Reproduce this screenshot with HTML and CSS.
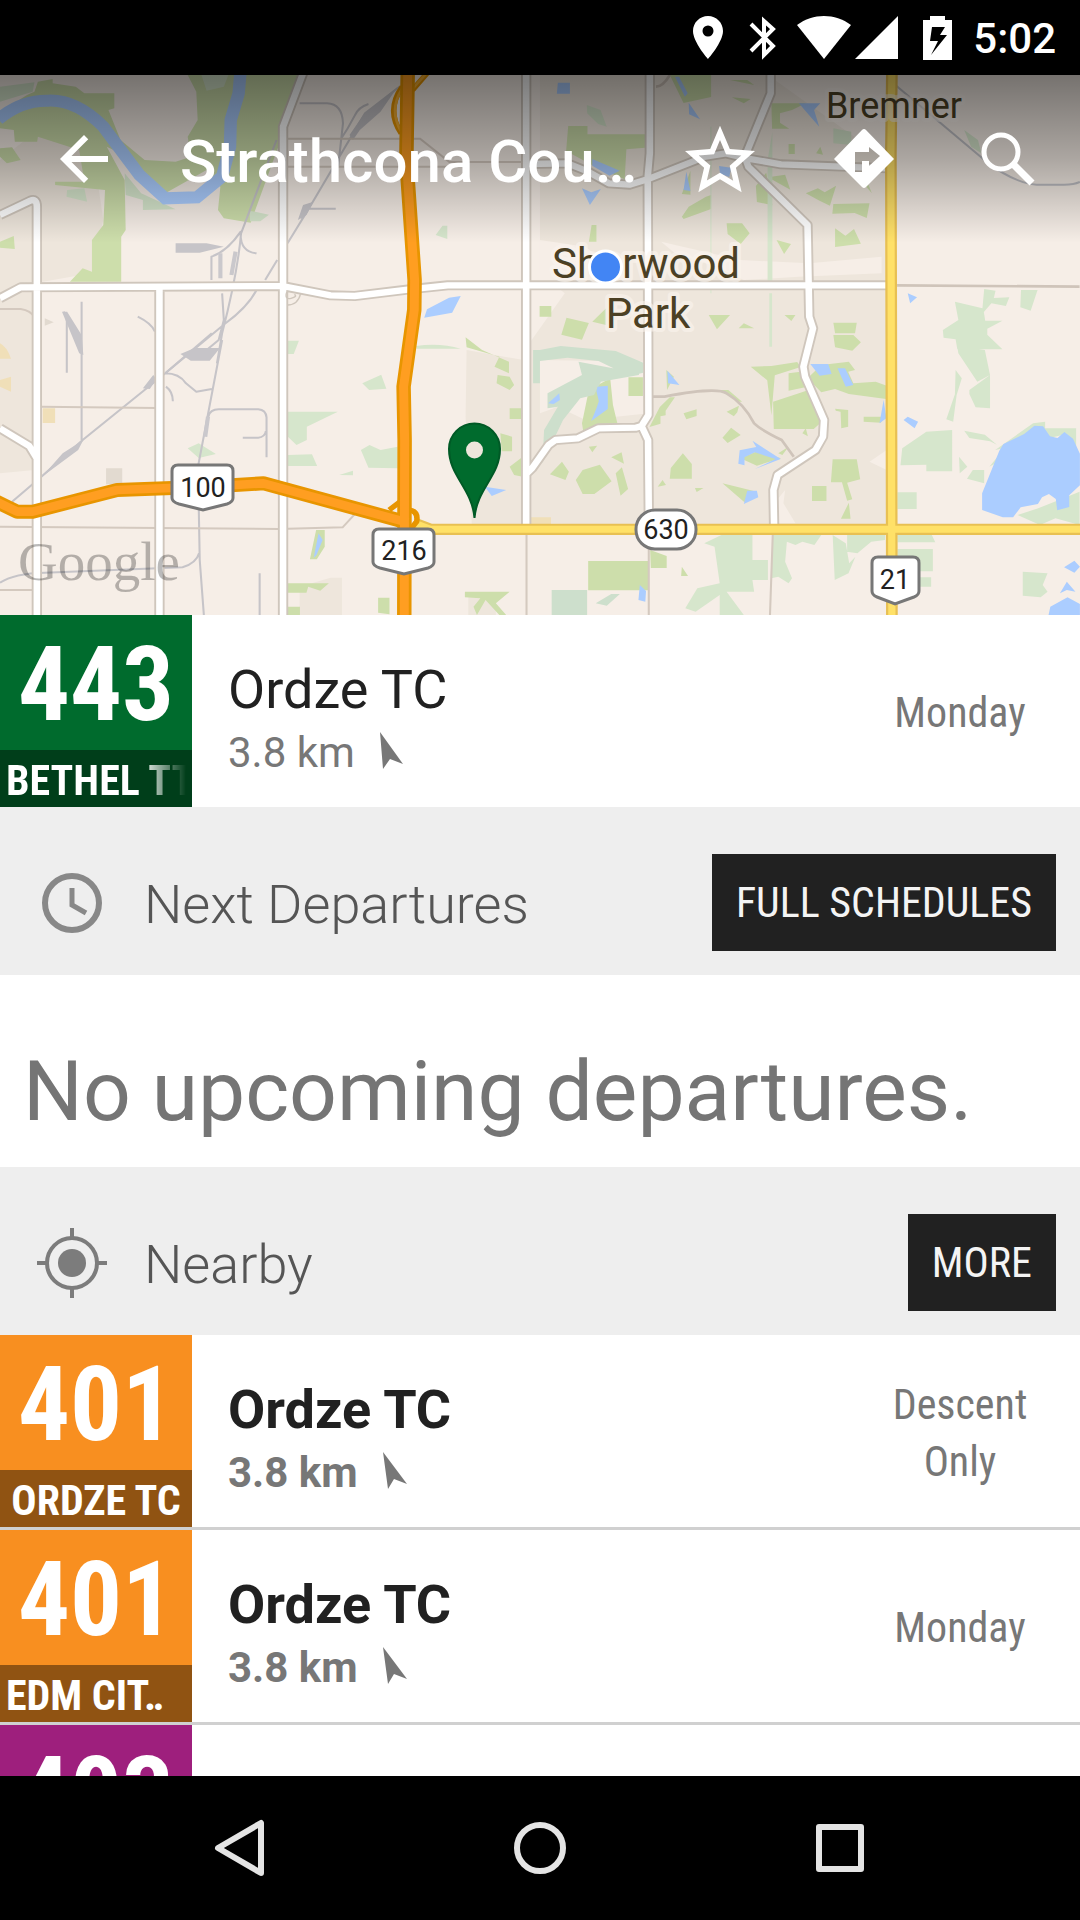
FILE: index.html
```html
<!DOCTYPE html>
<html lang="en">
<head>
<meta charset="utf-8">
<meta name="viewport" content="width=device-width, initial-scale=1">
<title>Strathcona County Transit</title>
<link rel="stylesheet" href="styles.css">
</head>
<body>
<div class="screen">
  <div class="status">
    <svg width="30" height="44" viewBox="0 0 30 44" fill="#fff"><path fill-rule="evenodd" d="M15 0C6.700 0 0 6.700 0 15c0 11 15 28 15 28s15-17 15-28C30 6.700 23.300 0 15 0zm0 9.500a5.500 5.500 0 1 1 0 11 5.500 5.500 0 0 1 0-11z"/></svg>
    <svg class="status-bluetooth" width="28" height="44" viewBox="0 0 28 44" fill="none" stroke="#fff" stroke-width="4"><path d="M2 8l22 22-9 9V5l9 8L2 35"/></svg>
    <svg class="status-wifi" width="54" height="44" viewBox="0 0 54 44" fill="#fff"><path d="M0 9C16-3 38-3 54 9L27 43z"/></svg>
    <svg width="44" height="44" viewBox="0 0 44 44" fill="#fff"><path d="M43 0v43H0z"/></svg>
    <svg class="status-battery" width="30" height="44" viewBox="0 0 30 44" fill="#fff"><path fill-rule="evenodd" d="M7 0h15v4h7v40H0V4h7zM9 11L7 25h8L8 39l16-20h-7l5-8z"/></svg>
    <span class="status-time">5:02</span>
  </div>

  <header class="map">
    <svg class="map-art" viewBox="0 75 1080 540" preserveAspectRatio="xMidYMid slice">
      <rect y="75" width="1080" height="540" fill="#f6eee7"/>
      <g transform="translate(0 60) scale(.34436 .33333)">
        <!-- built-up areas -->
        <g fill="#eee6dc">
          <path d="M0 300L110 210 270 270 300 480 265 640 100 670V1230L0 1240z"/>
          <path d="M1568 45H2230L2575 300V1395H1850L1530 1390V860L1640 700 1568 640z"/>
          <path d="M1355 870L1520 900V1392H1370L1352 1070z"/>
          <path d="M870 1580L960 1553H993V1665H870zM1360 1610H1440V1665H1360z"/>
        </g>
        <g fill="#f6eee7">
          <path d="M1568 900L1880 905 1885 1060 1700 1080 1620 1040 1568 1060zM1568 540L1700 560 1850 680 1568 690zM1960 580L2080 620 2160 660 2320 650 2560 640V590L2350 610 2150 600 1920 545zM2280 1290L2240 1340 2260 1390H2310L2275 1330zM2525 1205L2575 1170V1230z"/>
        </g>
        <g fill="#f0dfb8"><path d="M0 850Q20 860 32 896H0zM0 960L32 950V995L0 980zM124 1045h36v44h-36zM1540 1372h60v20h-60z"/></g>
        <path fill="#e2dad0" d="M308 1225h47v48h-47zM130 775l26 12-26 10z"/>

        <!-- parks -->
        <g fill="#cddeab">
          <path d="M0 165Q60 110 100 95L110 65 153 57V70L220 80 245 100H332V145L315 150 350 240 420 300 510 305 555 290 545 230 574 180 570 95 545 45H865L812 210V250L728 488 650 475 633 450 640 380 600 330 480 400 370 290 310 260 362 360 365 510 352 530V665H203L240 625 267 635V540L300 495 305 390 160 375V365H245L230 270 110 230 108 245H43L40 210 0 205z"/>
          <path d="M0 545L40 528 43 567 0 563zM0 265L35 262 60 300 20 310 0 290z"/>
          <path d="M1352 832L1400 870 1478 905V940L1436 920 1450 890 1355 862zM1445 945L1480 950 1493 975 1480 990 1442 970zM1480 1045h38v32h-38zM1453 1120l34 10v44h-30zM1480 1220l38-30v60l-25-5zM918 1410h25v50l-23 38h-20zM836 1570L955 1570 930 1592 895 1580 890 1598H836zM836 1640h35v25h-35zM1098 1613h33v50l-33-5zM1350 1595H1480L1440 1630 1470 1665H1450L1410 1620 1385 1665 1375 1640 1395 1615 1350 1612z"/>
          <path d="M1650 198h56v25h168v40l-55 5-5 90-80-35-90-50zM1945 45h120v66l-80 18zM2120 60h50l20 15zM2125 112l55 5-20 13zM2240 130h100l-40 20-35 10v28l27 18h-50zM1980 470l20-30 50-30 15-5v42l-80 30zM1980 402l25-70v72zM2195 378l30-40 18 98-45-10zM2230 352l50-8 15 45zM2340 400l35-15 20 12 33-20-18 60-30-15zM2420 432l105-2-8 44-35-15-65 2zM2425 505l30 22 25-20 20 44-75 10zM2110 490h45l22 30-26 32-38-30zM2255 540l42 12-20 30zM2290 252h18v30h-18zM2370 280l12-20 8 24zM2490 350l30 20 12 30zM1718 495h14v50h-22zM1567 738h34v32h-34zM1645 773l65 16-20 50-60-15zM2058 765h62l-38 43zM2160 790l30 15h-45zM2278 765h32l-12 18zM2420 788h68l-5 32h-58zM2420 825h58l22 22-25 25-50-10zM1720 785l40-40v50z"/>
          <path d="M1690 1090l20-100 62-35 8 80 14 60v20h-100zM1825 952h42v56h-42zM1935 930l22 20-20 40zM1945 1012l15 0-27 40v14l-15 3v22l-32 10 30-60zM1985 1060l38-12v20l-30 10zM2110 1055l36-18-5 20-10 12zM2098 1133l25-30 28 22-38 24zM2180 920l60-2 75-12 10 15-75 25-10 120-12-105zM2290 940l35-5 20 45-55 12zM2245 1025l75-25 28-10 50 85-35 32h-116zM2330 1120l10-15 6 24zM2345 955l40-40 80-10 18 25-20 5 15 35 65-5 52 20v35l-130-18-40-15-40 10zM2090 990h25l40 35-12 0zM2425 1046l38 4v50l-20 5-2-50-14-3zM2508 1070h50l15-10-15 28-50-3zM2418 1198h70l10 60-38 10 15 50-15 4-15-55h-32zM2358 1278h42v45h-42zM2465 1328l5 48h-28zM1597 1243l35-38 20 30-10 25zM1672 1260l20-30 50-16 34 50-50 38h-34zM1775 1192l30-15 7 34zM1788 1240l18-18 18 65-22 20zM1945 1256l3-32 35-44 26 32v44zM1910 1280l14-20 10 15zM2018 1284h25l-20 12zM2098 1270l100 25-36 32zM2150 1195l50-22 68 22-70 22zM1710 1160l24-3-14 20zM2260 1180l30-20-18 25zM1708 1503h174v88h-174zM1888 1470l48 18v36h-46zM1980 1520l18 28h-20z"/>
        </g>
        <g fill="#d6e6cc">
          <path d="M0 125L0 80 100 67 95 95zM585 45H663L650 80 600 92zM362 340L410 400 510 448 415 450V420L365 405zM195 390l50-5 8 40-60-15zM725 452l56 12-25 20h-30zM1265 525l20-28h14v40zM836 842l32 0-15 40h-20zM1052 970l55-26 15 42-50 4zM836 1055h145l-90 45 0 40-30 15-25-25zM1048 1170l25-15 32 15 50-10v65l-85-2zM836 1185l70-2 15 35-85 0zM545 1165l32-15 50 32-50 12zM985 1245l40-13v14zM1208 858q70-10 130 8l-128 0z"/>
          <path d="M1704 135l40 15 18 50-25-8-32-32zM2420 205l52 10v40l-52-5zM2800 210l40 30 10 40-30-20zM2243 215v450h-14V300zM2066 200v500h-3V200zM2234 700h8v160h-8z"/>
          <path d="M2738 810l45-30-10-55 80 20 5-58 33 5-5 22 45-2-10 26-42-8-22 26 4 26 50 0-44 24v18l44 44H2780l-5-30-35-5zM2965 690h48l-20 62-30-10zM2780 860l80 10 15 75-37 20-55-85zM2775 930l18 25-15 50-10 80-20-7 25-75zM2815 990l60-45v100l-42-3-18-40zM2620 1165l70-50 75-5v124h-75v-20l-75 2zM2800 1112l60 12 35 30-20-10-60-10zM2785 1190l24 30-22 20zM2825 1230h33v40l-50-14zM2873 1220l40-50-4 30zM2890 1170l110-80 35-5v20h90v80l-40-60-40 10z"/>
          <path d="M2955 1365l60-20 120-50v100l-70-20-45 20zM2606 1297h56v50h-56zM2606 1425l100 0 10 22h-110zM2606 1467h103v67h-50v18l45 0v28h-98zM2970 1535l72 5-14 35 14 20-20 17-52-5zM2095 1425h90v75h45l0 60-45 0 5 35-80 0 50 70h-70v-60l-70 50-30-10 35-60 65-15-15-110-30-10zM2245 1425h140l-20 30-35-10-20 10-25-10-5 60 20 50-10 15-30-20-20 5zM2418 1425l38 25 10 60 18-20-20 50-40 20zM2460 1425h110v15l-40 5-40 35-30-5z"/>
        </g>
        <g fill="#cddfcc">
          <path d="M1568 870l60-12 160 15 80 35v30l-40 10-90-45-90-10-80 10zM1680 905l100 20 80 0-5 20-110 20-20 40-40 10-50 65-60 130 5-100 40-70-30 5 0-45 100-55zM1602 1590h103v75h-103zM1548 870h20v100h-20zM1730 1630l45-28h25l-38 35z"/>
        </g>

        <!-- water -->
        <path fill="none" stroke="#abcdff" stroke-width="36" d="M-5 178Q60 120 140 122Q220 118 300 200L405 345 480 415 572 412 645 350 668 260 670 180 693 100 698 40"/>
        <g fill="#abcdff">
          <path d="M1232 773l8-25 64-35 34-5-25 50zM925 1420l12 20-18 45-8 8zM1408 1280l62 10-42 18zM1620 68h35v33h-38zM1960 50l12 0 25 50-8 10zM2000 128l33 50-32-15zM2320 130h62l-18 20 15 50-38-45zM1720 297l80 35-30 15-50-30zM1985 390l8-55 12 58zM2088 318l35 5-5 28-27-10zM1690 385l27 12 28-10-32 48zM2636 700l27 12-20 18z"/>
          <path d="M1735 980l30-3v70l-48 36 14-35 8-24-7-30zM1592 1030l32-30 2 20-18 12zM1938 932l35 43-33-5zM2353 912h52l10 30-35 5zM2432 925h22l24 50-22 5zM2566 1020l8 55-20 15zM2624 1080l12-10 30 15-10 20zM2185 1142l82 55-75 30 60-30-60-20-30 15 0 24-18-5 4-40 48-10zM2170 1292h28l4 20-42 20zM1858 1575l18 18-2 32-20-5z"/>
          <path d="M2852 1300l0 50 60 22h30l22-30 50-10 12-20 20-10 20 15 4 34 35-10v-35l31-30v-95l-20-45-25-20-20 18-22-5-20-30-25-2-30 25-60 30-12 20zM3090 1522l30-20 16 18-16 18zM3078 1600l20-35 25 30-25-5zM3045 1665l5-25 50-28 36 20v33z"/>
        </g>

        <!-- railways -->
        <g fill="none" stroke="#c6c4c8" stroke-width="6" stroke-linejoin="round">
          <path d="M870 130h80q44 2 46 60l-14 130M1160 80L1060 160 900 440 835 550M1070 132q-30 10-40 35-20 40-40 70M975 446h-80l-20 30M803 240L700 520Q690 640 645 820L630 910M745 580q-50-5-46-65-40 60-85 75l0 70M805 600L770 660M745 690Q720 740 655 790L480 940M645 700l5 80-15 60-35 30"/>
          <path d="M645 840L575 1220 580 1500 592 1665M605 1070q5-22 30-22h115q22 2 24 24v120M705 1133h45q20-2 22-20M480 940q40 0 60 30l30 25 45-8M482 980q20 15 20 44M185 755l50 100M194 775v163M237 725v415M400 770q40 20 50 45M615 820L480 940 240 1140 120 1250 35 1325M0 1568Q40 1540 130 1538L530 1522Q570 1510 578 1480M754 1540v125"/>
        </g>
        <g fill="#c6c4c8"><path d="M510 550h90l50 10-70 18h-70zM565 864l74 0-30 38h-55l-30-20zM122 1250l60-70 60-40-15 30zM415 985l30-40 10 12-20 30zM180 755l15 0 42 70 5 60-12-5zM1015 225l40-60 100-85-50 75-60 55-20 30zM865 480l15-45 30-10-20 40z"/></g>
        <path fill="none" stroke="#cac8cc" stroke-width="12" d="M672 645l12-70M640 580v75M596 1130l8-60"/>

        <!-- minor roads -->
        <g fill="none" stroke="#d4c9bf" stroke-width="6">
          <path d="M0 747h60q30 5 40 25M120 1040l335 4M0 1400l460 4 350 3 185-5 40-45M0 1590h100M830 236h390l85 70h220M830 320h480M1529 1425v240M1884 1460v205M2244 1425l-8 240"/>
          <path d="M1890 1010h40Q2080 980 2110 1000 2160 1030 2190 1090 2210 1110 2270 1140L2305 1190M2605 676l530 4M1905 80q20 0 40-35" stroke="#cfc4ba" stroke-width="8"/>
          <path d="M2600 75L2870 310Q2950 370 3010 374h80q30 0 46-8" stroke="#bfbfc4"/>
        </g>

        <!-- main roads -->
        <g fill="none" stroke="#cfc6bc" stroke-width="30" stroke-linejoin="round">
          <path d="M0 465L88 422Q107 414 107 440V1665M463 1665V680M880 40L822 200V1665M1528 40V1395M1530 1240L1545 1225 1593 1155 1613 1140 1678 1135 1738 1105 1846 1103 1863 1098M0 715L60 682 820 678 960 706 1030 708 1190 688 1300 676 2578 676M0 1105L85 1158 107 1195M1887 40V280L1881 350 1883 1065 1863 1098 1882 1140 1884 1360M2238 40V100L2163 290 2173 320 2345 495 2350 770 2361 805 2333 920 2338 950 2393 1080 2390 1130 2368 1170 2258 1245 2246 1290 2248 1400M1528 312L1648 310 1708 335 1768 370 1828 374 1880 358 2048 290 2108 280 2168 295 2268 313 2578 325"/>
          <path stroke="#fff" stroke-width="19" d="M0 465L88 422Q107 414 107 440V1665M463 1665V680M880 40L822 200V1665M1528 40V1395M1530 1240L1545 1225 1593 1155 1613 1140 1678 1135 1738 1105 1846 1103 1863 1098M0 715L60 682 820 678 960 706 1030 708 1190 688 1300 676 2578 676M0 1105L85 1158 107 1195M1887 40V280L1881 350 1883 1065 1863 1098 1882 1140 1884 1360M2238 40V100L2163 290 2173 320 2345 495 2350 770 2361 805 2333 920 2338 950 2393 1080 2390 1130 2368 1170 2258 1245 2246 1290 2248 1400M1528 312L1648 310 1708 335 1768 370 1828 374 1880 358 2048 290 2108 280 2168 295 2268 313 2578 325"/>
        </g>
        <path fill="none" stroke="#cfc6bc" stroke-width="4" d="M833 695q-8 25 12 20t10-12M835 735q30 0 38-34"/>

        <!-- highways -->
        <g fill="none" stroke-linejoin="round">
          <path stroke="#e8c053" stroke-width="34" d="M2590 40L2587 280 2590 1665M1200 1388L1250 1408H3140"/>
          <path stroke="#ffe168" stroke-width="21" d="M2590 40L2587 280 2590 1665M1200 1388L1250 1408H3140"/>
          <path stroke="#e89500" stroke-width="16" d="M1168 80Q1120 150 1165 220M1240 40L1198 90M1130 1350l45-35M1190 1350q25 5 20 35l-20 25M1120 1375l50 25"/>
          <path stroke="#f9b233" stroke-width="8" d="M1168 85Q1128 150 1165 215M1238 40L1195 90"/>
          <path stroke="#e89500" stroke-width="42" d="M1184 40L1180 300 1204 660 1203 750 1172 980 1175 1140 1174 1665M-10 1325L50 1355H95L340 1290 600 1280 765 1270 1185 1388"/>
          <path stroke="#ff9e21" stroke-width="26" d="M1184 40L1180 300 1204 660 1203 750 1172 980 1175 1140 1174 1665M-10 1325L50 1355H95L340 1290 600 1280 765 1270 1185 1388"/>
        </g>
      </g>

      <g class="place">
        <text x="894" y="118" font-size="36">Bremner</text>
        <text x="646" y="278" font-size="42">Sherwood</text>
        <text x="648" y="328" font-size="42">Park</text>
      </g>
      <g fill="#fff" stroke="#777" stroke-width="3">
        <path d="M178 465h49q6 0 6 6v27q0 4-6 6l-24 6-24-6q-7-2-7-6v-27q0-6 6-6z"/>
        <path d="M379 529h49q6 0 6 6v27q0 4-6 6l-24 6-24-6q-7-2-7-6v-27q0-6 6-6z"/>
        <path d="M878 557h35q6 0 6 6v28q0 4-5 6l-19 7-18-7q-5-2-5-6v-28q0-6 6-6z"/>
        <rect x="636" y="510" width="60" height="39" rx="19"/>
      </g>
      <g class="shield">
        <text x="203" y="497">100</text>
        <text x="404" y="560">216</text>
        <text x="666" y="539">630</text>
        <text x="895" y="589">21</text>
      </g>
      <text class="watermark" x="18" y="580">Google</text>
      <path d="M474.500 518C472 488 449 476 449 449a25.500 25.500 0 0 1 51 0c0 27-23 39-25.500 69z" fill="#006b2d" stroke="#005a26" stroke-width="2"/>
      <circle cx="474.500" cy="450" r="8.500" fill="#eee6dc"/>
      <circle cx="605.500" cy="267" r="16" fill="#4285f4" stroke="#fff" stroke-width="3"/>
    </svg>

    <div class="appbar">
      <button class="appbar-back" aria-label="Back"><svg width="72" height="72" viewBox="0 0 24 24" fill="#fff"><path d="M20 11H7.830l5.590-5.590L12 4l-8 8 8 8 1.410-1.410L7.830 13H20v-2z"/></svg></button>
      <h1 class="appbar-title">Strathcona Cou…</h1>
      <button class="appbar-action" aria-label="Favourite"><svg width="84" height="84" viewBox="0 0 24 23" fill="#fff"><path d="M22 9.240l-7.190-.62L12 2 9.190 8.630 2 9.240l5.460 4.730L5.820 21 12 17.270 18.180 21l-1.630-7.030L22 9.240zM12 15.400l-3.760 2.270 1-4.280-3.320-2.880 4.380-.38L12 6.100l1.710 4.040 4.380.38-3.320 2.880 1 4.280L12 15.400z"/></svg></button>
      <button class="appbar-action" aria-label="Directions"><svg width="60" height="60" viewBox="0 0 60 60" fill="#fff"><path fill-rule="evenodd" d="M0 30L28 1q2-2 4 0l28 29-28 28q-2 2-4 0zM21 43h7V32h7v5l11-10-11-9v5H21z"/></svg></button>
      <button class="appbar-action" aria-label="Search"><svg width="54" height="54" viewBox="0 0 54 54" fill="none" stroke="#fff"><circle cx="20" cy="20" r="17" stroke-width="5"/><path d="M33 33l18 18" stroke-width="7"/></svg></button>
    </div>
  </header>

  <main class="content">
    <a class="row" href="#stop">
      <span class="badge badge-green"><span class="badge-number">443</span><span class="badge-name badge-name-fade">BETHEL TT</span></span>
      <span class="row-text">
        <span class="row-title">Ordze TC</span>
        <span class="row-distance">3.8 km <svg width="26" height="38" viewBox="0 0 26 38" fill="#777"><path d="M1 0l23 32-13-5-7 10z"/></svg></span>
      </span>
      <span class="row-when">Monday</span>
    </a>

    <section>
      <div class="section-head">
        <svg width="72" height="72" viewBox="0 0 72 72" fill="none" stroke="#888" stroke-width="6"><circle cx="36" cy="36" r="27"/><path d="M36 21v17l14 8" stroke-width="5"/></svg>
        <h2>Next Departures</h2>
        <button class="section-button">FULL SCHEDULES</button>
      </div>
      <p class="empty">No upcoming departures.</p>
    </section>

    <section>
      <div class="section-head">
        <svg width="72" height="72" viewBox="0 0 72 72" fill="none" stroke="#7c7c7c" stroke-width="4"><circle cx="36" cy="36" r="25"/><circle cx="36" cy="36" r="14" fill="#7c7c7c" stroke="none"/><path d="M36 1v10M36 61v10M1 36h10M61 36h10"/></svg>
        <h2>Nearby</h2>
        <button class="section-button">MORE</button>
      </div>
      <div class="rows">
        <a class="row row-strong" href="#401-ordze">
          <span class="badge badge-orange"><span class="badge-number">401</span><span class="badge-name badge-name-center">ORDZE TC</span></span>
          <span class="row-text">
            <span class="row-title">Ordze TC</span>
            <span class="row-distance">3.8 km <svg width="26" height="38" viewBox="0 0 26 38" fill="#777"><path d="M1 0l24 32-13-5-6 10z"/></svg></span>
          </span>
          <span class="row-when">Descent<br>Only</span>
        </a>
        <a class="row row-strong" href="#401-city">
          <span class="badge badge-orange"><span class="badge-number">401</span><span class="badge-name">EDM CIT‥</span></span>
          <span class="row-text">
            <span class="row-title">Ordze TC</span>
            <span class="row-distance">3.8 km <svg width="26" height="38" viewBox="0 0 26 38" fill="#777"><path d="M1 0l24 32-13-5-6 10z"/></svg></span>
          </span>
          <span class="row-when">Monday</span>
        </a>
        <a class="row" href="#403">
          <span class="badge badge-purple"><span class="badge-number">403</span><span class="badge-name"></span></span>
        </a>
      </div>
    </section>
  </main>

  <nav class="navbar">
    <button aria-label="Back"><svg width="60" height="60" viewBox="0 0 60 60" fill="none" stroke="#e4e4e4" stroke-width="6" stroke-linejoin="round"><path d="M51 5v50L8 30z"/></svg></button>
    <button aria-label="Home"><svg width="60" height="60" viewBox="0 0 60 60" fill="none" stroke="#e4e4e4" stroke-width="6"><circle cx="30" cy="30" r="23"/></svg></button>
    <button aria-label="Overview"><svg width="60" height="60" viewBox="0 0 60 60" fill="none" stroke="#e4e4e4" stroke-width="6" stroke-linejoin="round"><path d="M9 9h42v42H9z"/></svg></button>
  </nav>
</div>
</body>
</html>
```
FILE: styles.css
```css
* { box-sizing: border-box; }

body {
  margin: 0;
  font-family: Roboto, "Noto Sans", sans-serif;
  color: #212121;
  background: #fff;
}

button {
  display: flex;
  align-items: center;
  justify-content: center;
  margin: 0;
  padding: 0;
  border: 0;
  background: none;
}

svg { display: block; flex: none; }

.screen {
  display: flex;
  flex-direction: column;
  height: 100vh;
}

/* Status bar */
.status {
  display: flex;
  flex: none;
  align-items: center;
  justify-content: flex-end;
  height: 75px;
  padding-right: 24px;
  background: #000;
  color: #fff;
}
.status-bluetooth { margin-left: 26px; }
.status-wifi { margin: 0 4px 0 20px; }
.status-battery { margin: 0 20px 0 24px; }
.status-time {
  padding-top: 3px;
  font-size: 42px;
  font-weight: 500;
  line-height: 48px;
}

/* Map header */
.map { position: relative; flex: none; height: 540px; }
.map-art { width: 100%; height: 100%; }
.place {
  fill: #4b4024;
  stroke: rgba(250, 244, 238, .6);
  stroke-width: 8px;
  stroke-linejoin: round;
  paint-order: stroke;
  text-anchor: middle;
}
.shield { fill: #212121; font-size: 27px; text-anchor: middle; }
.watermark {
  fill: #000;
  fill-opacity: .27;
  font-family: "Liberation Serif", serif;
  font-size: 55px;
}

.appbar {
  position: absolute;
  inset: 0 0 auto;
  display: flex;
  align-items: center;
  height: 168px;
  background: linear-gradient(rgba(0, 0, 0, .52), rgba(0, 0, 0, .3) 50%, transparent);
  color: #fff;
}
.appbar-back { width: 168px; height: 168px; }
.appbar-title {
  flex: 1;
  margin: 0;
  padding: 5px 0 0 12px;
  font-size: 60px;
  font-weight: 500;
  line-height: 72px;
  white-space: nowrap;
}
.appbar-action { width: 144px; height: 144px; }

/* Scrolling content */
.content { flex: 1; min-height: 0; overflow: hidden; }

.row {
  display: flex;
  height: 192px;
  color: inherit;
  text-decoration: none;
}
.rows .row + .row { border-top: 3px solid #d0d0d0; height: 195px; }

.badge {
  display: flex;
  flex: none;
  flex-direction: column;
  width: 192px;
  color: #fff;
  font-family: "Roboto Condensed", "Liberation Sans Narrow", Roboto, sans-serif;
  font-weight: 700;
}
.badge-green { background: #006b2d; }
.badge-orange { background: #f88f20; }
.badge-purple { background: #9e1f7d; }
.badge-number {
  height: 135px;
  padding-left: 18px;
  font-size: 103px;
  line-height: 140px;
}
.badge-name {
  flex: 1;
  padding: 0 6px;
  overflow: hidden;
  background: rgba(0, 0, 0, .42);
  font-size: 42px;
  line-height: 62px;
  white-space: nowrap;
}
.badge-name-center { text-align: center; }
.badge-name-fade {
  color: transparent;
  background: linear-gradient(90deg, #fff 140px, rgba(255, 255, 255, 0) 186px) text, rgba(0, 0, 0, .42);
  -webkit-background-clip: text, border-box;
  background-clip: text, border-box;
}

.row-text {
  display: flex;
  flex: 1;
  flex-direction: column;
  justify-content: center;
  padding: 18px 0 0 36px;
}
.row-title { font-size: 54px; line-height: 66px; }
.row-distance {
  display: flex;
  align-items: center;
  gap: 24px;
  color: #777;
  font-size: 42px;
  line-height: 60px;
}
.row-distance svg { margin-bottom: 4px; }
.row-strong .row-title,
.row-strong .row-distance { font-weight: 700; }
.row-when {
  align-self: center;
  width: 240px;
  padding-top: 3px;
  color: #777;
  font-family: "Roboto Condensed", "Liberation Sans Narrow", Roboto, sans-serif;
  font-size: 42px;
  line-height: 57px;
  text-align: center;
}

.section-head {
  display: flex;
  align-items: center;
  height: 168px;
  padding: 47px 24px 24px 36px;
  background: #eee;
}
.section-head h2 {
  flex: 1;
  margin: 0;
  padding: 5px 0 0 36px;
  color: #555;
  font-size: 54px;
  font-weight: 300;
  line-height: 66px;
}
.section-button {
  height: 97px;
  padding: 0 24px;
  background: #212121;
  color: #f4f4f4;
  font-family: "Roboto Condensed", "Liberation Sans Narrow", Roboto, sans-serif;
  font-size: 42px;
}

.empty {
  height: 192px;
  margin: 0;
  padding: 68px 0 0 23px;
  color: #757575;
  font-size: 84px;
  line-height: 98px;
}

/* System navigation */
.navbar {
  display: grid;
  flex: none;
  grid-template-columns: repeat(3, 1fr);
  height: 144px;
  padding: 0 90px;
  background: #000;
}
```
